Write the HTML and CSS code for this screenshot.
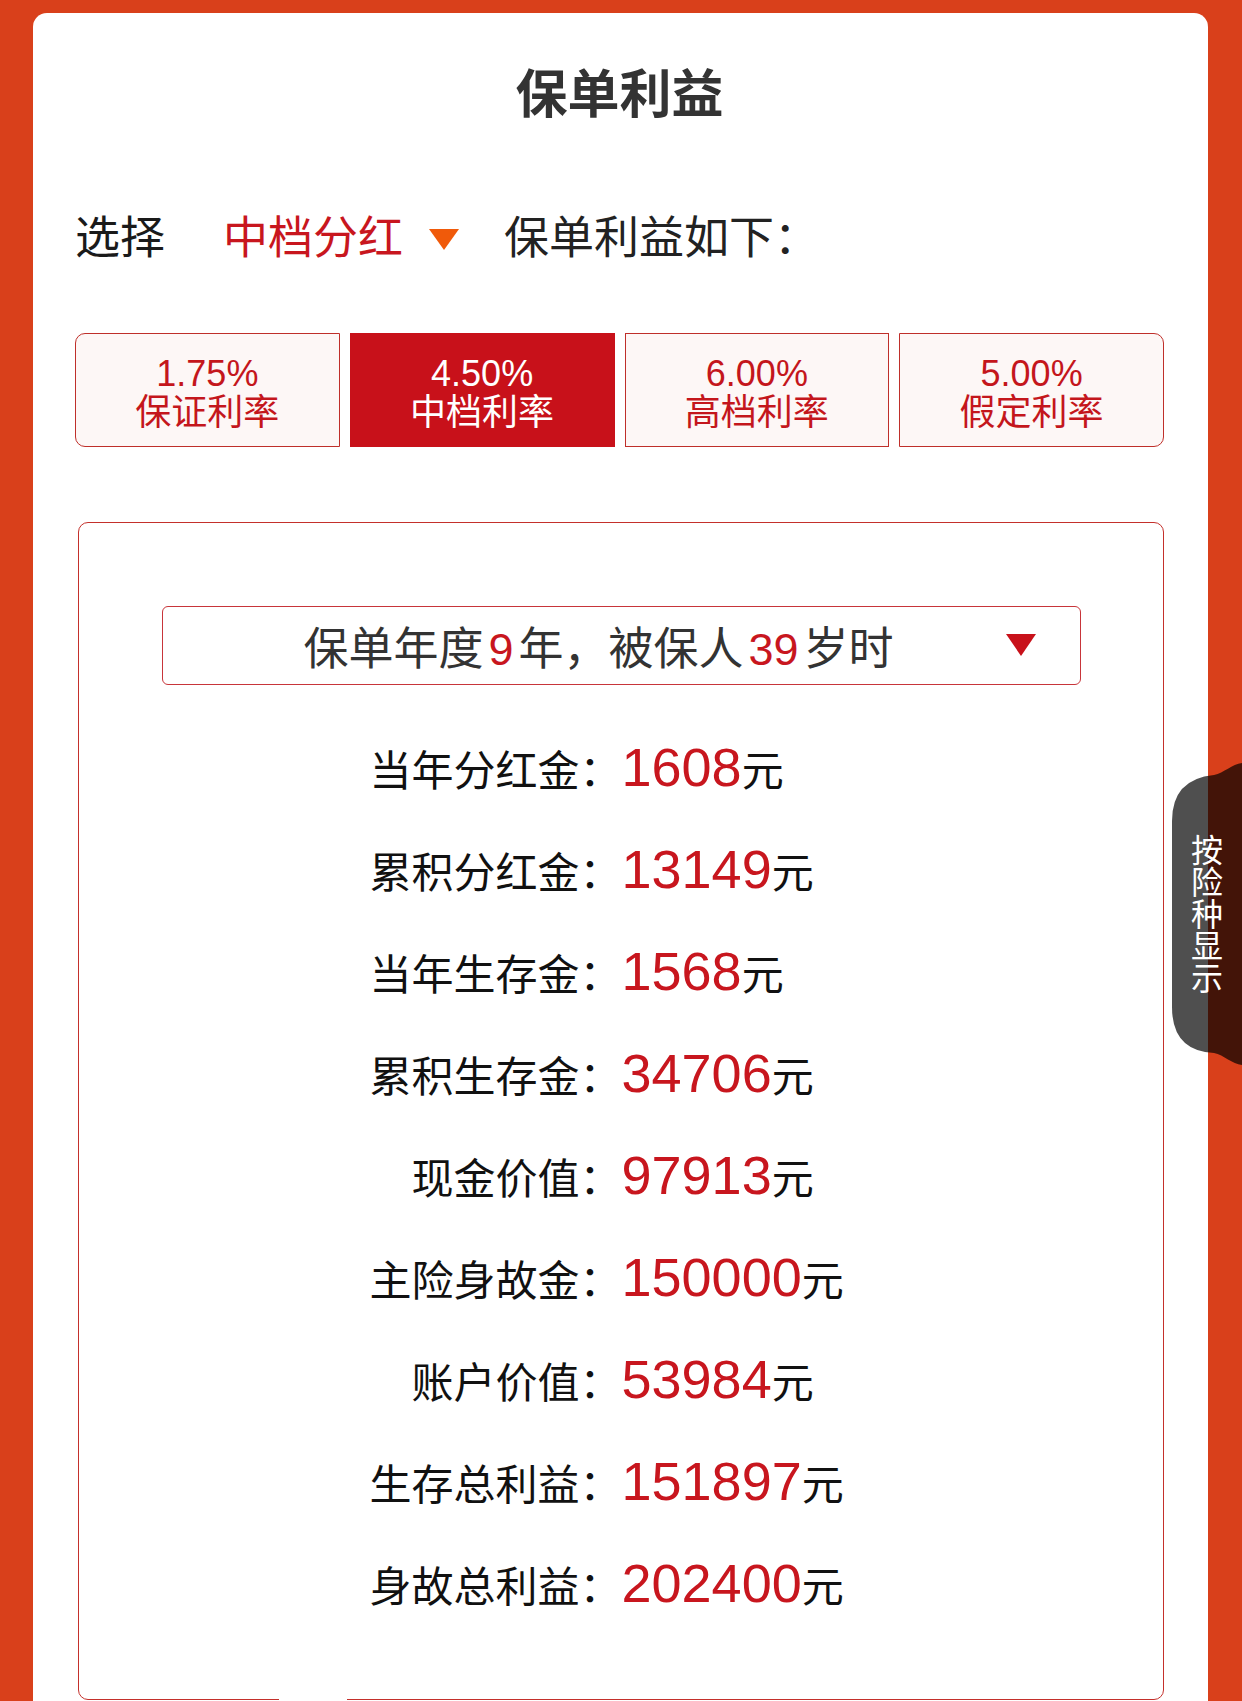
FILE: index.html
```html
<!DOCTYPE html>
<html lang="zh-CN">
<head>
<meta charset="utf-8">
<title>保单利益</title>
<link rel="stylesheet" href="styles.css">
</head>
<body>
<div class="card">
  <h1 class="title">保单利益</h1>
  <div class="pick">
    <span class="pick-label">选择</span>
    <span class="pick-value">中档分红</span>
    <span class="pick-caret"></span>
    <span class="pick-tail">保单利益如下：</span>
  </div>
  <div class="rates">
    <div class="rate first"><span>1.75%</span><span>保证利率</span></div>
    <div class="rate active"><span>4.50%</span><span>中档利率</span></div>
    <div class="rate"><span>6.00%</span><span>高档利率</span></div>
    <div class="rate last"><span>5.00%</span><span>假定利率</span></div>
  </div>
  <div class="box">
    <div class="select">
      <span class="select-text">保单年度<em>9</em>年，被保人<em>39</em>岁时</span>
      <span class="select-caret"></span>
    </div>
    <div class="rows">
      <div class="row"><span class="label">当年分红金：</span><span class="val"><b>1608</b>元</span></div>
      <div class="row"><span class="label">累积分红金：</span><span class="val"><b>13149</b>元</span></div>
      <div class="row"><span class="label">当年生存金：</span><span class="val"><b>1568</b>元</span></div>
      <div class="row"><span class="label">累积生存金：</span><span class="val"><b>34706</b>元</span></div>
      <div class="row"><span class="label">现金价值：</span><span class="val"><b>97913</b>元</span></div>
      <div class="row"><span class="label">主险身故金：</span><span class="val"><b>150000</b>元</span></div>
      <div class="row"><span class="label">账户价值：</span><span class="val"><b>53984</b>元</span></div>
      <div class="row"><span class="label">生存总利益：</span><span class="val"><b>151897</b>元</span></div>
      <div class="row"><span class="label">身故总利益：</span><span class="val"><b>202400</b>元</span></div>
    </div>
    <span class="box-gap"></span>
  </div>
</div>
<div class="side-tab">
  <svg class="side-bg" viewBox="0 0 70 302" width="70" height="302" aria-hidden="true">
    <path d="M70,0 C60,1 52,10 42,12 Q0,16 0,58 L0,244 Q0,288 42,290 C52,292 60,301 70,302 Z" fill="rgba(0,0,0,0.69)"/>
  </svg>
  <div class="side-text"><span>按险种显示</span></div>
</div>
</body>
</html>
```

FILE: styles.css
```css
* { box-sizing: border-box; }
html, body { margin: 0; padding: 0; }
body {
  position: relative;
  height: 1701px;
  overflow: hidden;
  background: #d9401b;
  font-family: "Liberation Sans", "Noto Sans CJK SC", sans-serif;
}
.card {
  margin: 13px 34px 0 33px;
  height: 1688px;
  background: #fff;
  border-radius: 14px 14px 0 0;
  padding: 52px 44px 0 42px;
}
.title {
  margin: 0;
  text-align: center;
  font-size: 52px;
  line-height: 60px;
  font-weight: 700;
  color: #333;
}
.pick {
  display: flex;
  align-items: center;
  height: 60px;
  margin-top: 84px;
  font-size: 45px;
  line-height: 60px;
}
.pick-label { color: #1a1a1a; }
.pick-value { color: #c8161e; margin-left: 58px; }
.pick-caret {
  width: 0;
  height: 0;
  margin-left: 26px;
  border-left: 15.5px solid transparent;
  border-right: 15.5px solid transparent;
  border-top: 21px solid #f05a0a;
}
.pick-tail { color: #222; margin-left: 45px; }

.rates {
  display: grid;
  grid-template-columns: repeat(4, 1fr);
  column-gap: 10px;
  margin-top: 64px;
}
.rate {
  height: 114px;
  display: flex;
  flex-direction: column;
  align-items: center;
  justify-content: center;
  padding-top: 5px;
  border: 1.5px solid #bf2f2a;
  background: #fdf7f6;
  color: #c4161c;
  font-size: 36px;
  line-height: 39px;
}
.rate.first { border-radius: 10px 0 0 10px; }
.rate.last { border-radius: 0 10px 10px 0; }
.rate.active { background: #c8111a; border-color: #c8111a; color: #fff; }

.box {
  position: relative;
  height: 1178px;
  margin: 75px 0 0 3px;
  border: 1.5px solid #c4302b;
  border-radius: 10px;
  padding: 82.5px 82.5px 0;
}
.select {
  position: relative;
  height: 79px;
  display: flex;
  align-items: center;
  justify-content: center;
  padding-right: 45px;
  border: 1.5px solid #c8353a;
  border-radius: 6px;
  font-size: 45px;
  color: #333;
}
.select em { font-style: normal; color: #c8161e; margin: 0 5px; }
.select-caret {
  position: absolute;
  right: 43.5px;
  top: 27.5px;
  width: 0;
  height: 0;
  border-left: 15px solid transparent;
  border-right: 15px solid transparent;
  border-top: 22px solid #c8111a;
}
.rows { margin-top: 32px; }
.row {
  display: flex;
  align-items: baseline;
  height: 102px;
  padding-top: 20px;
}
.label {
  width: 460px;
  text-align: right;
  font-size: 42px;
  line-height: 60px;
  color: #111;
}
.val {
  margin-left: 0;
  font-size: 42px;
  line-height: 60px;
  color: #111;
}
.val b { font-weight: 400; font-size: 54px; color: #c8161e; }
.box-gap {
  position: absolute;
  left: 199.5px;
  bottom: -3px;
  width: 68px;
  height: 5px;
  background: #fff;
}

.side-tab {
  position: absolute;
  left: 1172px;
  top: 763px;
  width: 70px;
  height: 302px;
}
.side-bg { position: absolute; left: 0; top: 0; display: block; }
.side-text {
  position: absolute;
  inset: 0;
  display: flex;
  align-items: center;
  justify-content: center;
}
.side-text span {
  writing-mode: vertical-rl;
  font-family: "Noto Sans CJK SC", sans-serif;
  font-size: 32px;
  line-height: 32px;
  color: #fff;
}
```
